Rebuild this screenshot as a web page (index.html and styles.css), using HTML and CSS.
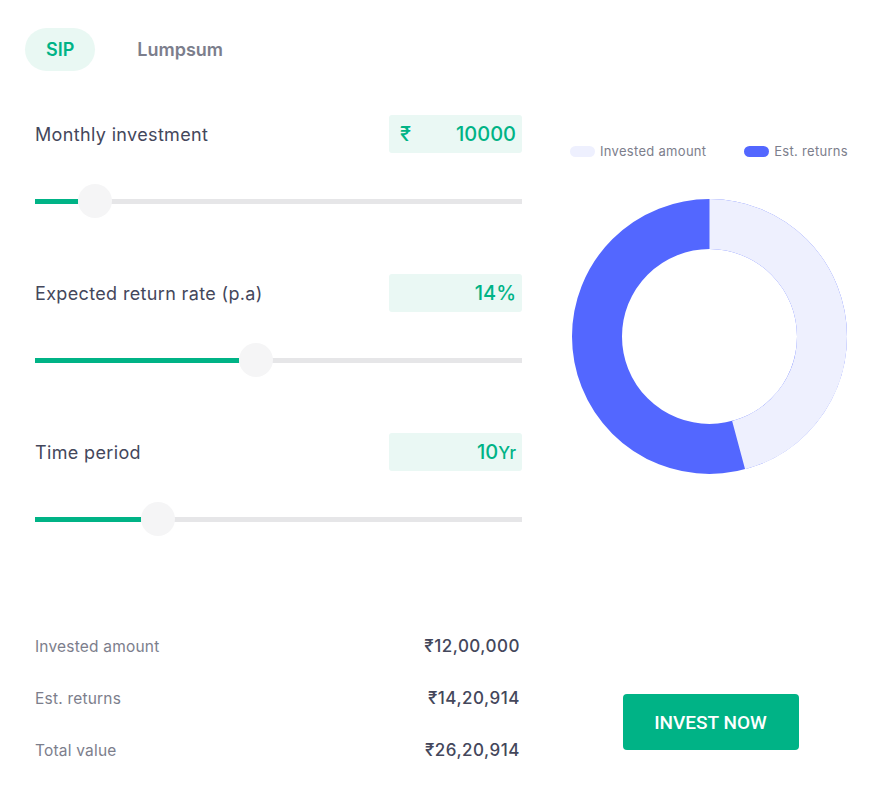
FILE: index.html
```html
<!DOCTYPE html>
<html lang="en">
<head>
<meta charset="utf-8">
<title>SIP Calculator</title>
<link rel="stylesheet" href="styles.css">
</head>
<body>
<div class="page">
  <div class="tabs">
    <div class="tab tab-active">SIP</div>
    <div class="tab">Lumpsum</div>
  </div>
  <div class="main">
    <div class="inputs">
      <div class="field">
        <div class="field-head">
          <div class="field-label">Monthly investment</div>
          <div class="field-box"><span class="cur">₹</span><span class="val">10000</span></div>
        </div>
        <div class="slider">
          <div class="track"><div class="fill" style="width: 43px"></div></div>
          <div class="thumb" style="left: 43px"></div>
        </div>
      </div>
      <div class="field">
        <div class="field-head">
          <div class="field-label">Expected return rate (p.a)</div>
          <div class="field-box"><span class="val">14%</span></div>
        </div>
        <div class="slider">
          <div class="track"><div class="fill" style="width: 204px"></div></div>
          <div class="thumb" style="left: 204px"></div>
        </div>
      </div>
      <div class="field">
        <div class="field-head">
          <div class="field-label">Time period</div>
          <div class="field-box"><span class="val">10<span class="unit">Yr</span></span></div>
        </div>
        <div class="slider">
          <div class="track"><div class="fill" style="width: 106px"></div></div>
          <div class="thumb" style="left: 106px"></div>
        </div>
      </div>
      <div class="summary">
        <div class="sum-row"><span class="sum-label">Invested amount</span><span class="sum-val">₹12,00,000</span></div>
        <div class="sum-row"><span class="sum-label">Est. returns</span><span class="sum-val">₹14,20,914</span></div>
        <div class="sum-row"><span class="sum-label">Total value</span><span class="sum-val">₹26,20,914</span></div>
      </div>
    </div>
    <div class="chart-col">
      <div class="legend">
        <div class="legend-item"><span class="swatch swatch-invested"></span>Invested amount</div>
        <div class="legend-item"><span class="swatch swatch-returns"></span>Est. returns</div>
      </div>
      <svg class="donut" width="275" height="275" viewBox="0 0 275 275">
        <circle cx="137.5" cy="137.5" r="112.5" fill="none" stroke="#5367ff" stroke-width="50"/>
        <circle cx="137.5" cy="137.5" r="112.5" fill="none" stroke="#eef0fe" stroke-width="50" stroke-dasharray="323.64 706.86" transform="rotate(-90 137.5 137.5)"/>
      </svg>
      <button class="invest-btn">INVEST NOW</button>
    </div>
  </div>
</div>
</body>
</html>
```

FILE: styles.css
```css
* { box-sizing: border-box; }
html, body { margin: 0; padding: 0; background: #ffffff; }
body {
  font-family: Inter, "Noto Sans", "DejaVu Sans", sans-serif;
  color: #44475b;
}
.page {
  padding: 28px 0 0 25px;
}
.tabs {
  display: flex;
  gap: 21px;
}
.tab {
  height: 43px;
  padding: 0 21px;
  border-radius: 22px;
  display: flex;
  align-items: center;
  font-size: 18px;
  font-weight: 600;
  color: #7c7e8c;
}
.tab-active {
  background: #e9f8f3;
  color: #00b386;
}
.main {
  display: flex;
  gap: 48px;
  padding-left: 10px;
  margin-top: 44px;
}
.inputs {
  width: 487px;
}
.field {
  margin-bottom: 56px;
}
.field-head {
  display: flex;
  justify-content: space-between;
  align-items: center;
  height: 38px;
}
.field-label {
  font-size: 18px;
  letter-spacing: 0.35px;
  color: #44475b;
}
.field-box {
  width: 133px;
  height: 38px;
  background: #eaf8f4;
  border-radius: 3px;
  display: flex;
  align-items: center;
  justify-content: space-between;
  padding: 0 6px 0 11px;
  color: #00b386;
  font-size: 20px;
  font-weight: 500;
}
.field-box .val {
  margin-left: auto;
}
.unit {
  font-size: 17px;
  font-weight: 500;
}
.slider {
  position: relative;
  height: 34px;
  margin-top: 31px;
  display: flex;
  align-items: center;
}
.track {
  width: 100%;
  height: 5px;
  background: #e6e6e8;
  display: flex;
}
.fill {
  height: 100%;
  background: #00b386;
}
.thumb {
  position: absolute;
  top: 0;
  width: 34px;
  height: 34px;
  border-radius: 50%;
  background: #f5f5f6;
}
.summary {
  margin-top: 84px;
  padding-right: 2px;
}
.sum-row {
  height: 52px;
  display: flex;
  align-items: center;
  justify-content: space-between;
}
.sum-label {
  font-size: 15.5px;
  letter-spacing: 0.2px;
  color: #7c7e8c;
}
.sum-val {
  font-size: 17px;
  font-weight: 500;
  letter-spacing: 0.5px;
  color: #44475b;
}
.chart-col {
  width: 278px;
  display: flex;
  flex-direction: column;
  align-items: center;
}
.legend {
  margin-top: 28px;
  width: 100%;
  height: 16px;
  display: flex;
  justify-content: space-between;
  align-items: center;
}
.legend-item {
  display: flex;
  align-items: center;
  gap: 5px;
  font-size: 13px;
  letter-spacing: 0.3px;
  color: #7c7e8c;
}
.swatch {
  width: 25px;
  height: 11px;
  border-radius: 6px;
  display: inline-block;
}
.swatch-invested { background: #eef0fe; }
.swatch-returns { background: #5367ff; }
.donut {
  display: block;
  margin-top: 40px;
}
.invest-btn {
  margin-top: 220px;
  margin-left: 3px;
  width: 176px;
  height: 56px;
  border: none;
  border-radius: 4px;
  background: #00b386;
  color: #ffffff;
  font-family: Roboto, "Liberation Sans", sans-serif;
  font-size: 19px;
  font-weight: 500;
  cursor: pointer;
}
```
